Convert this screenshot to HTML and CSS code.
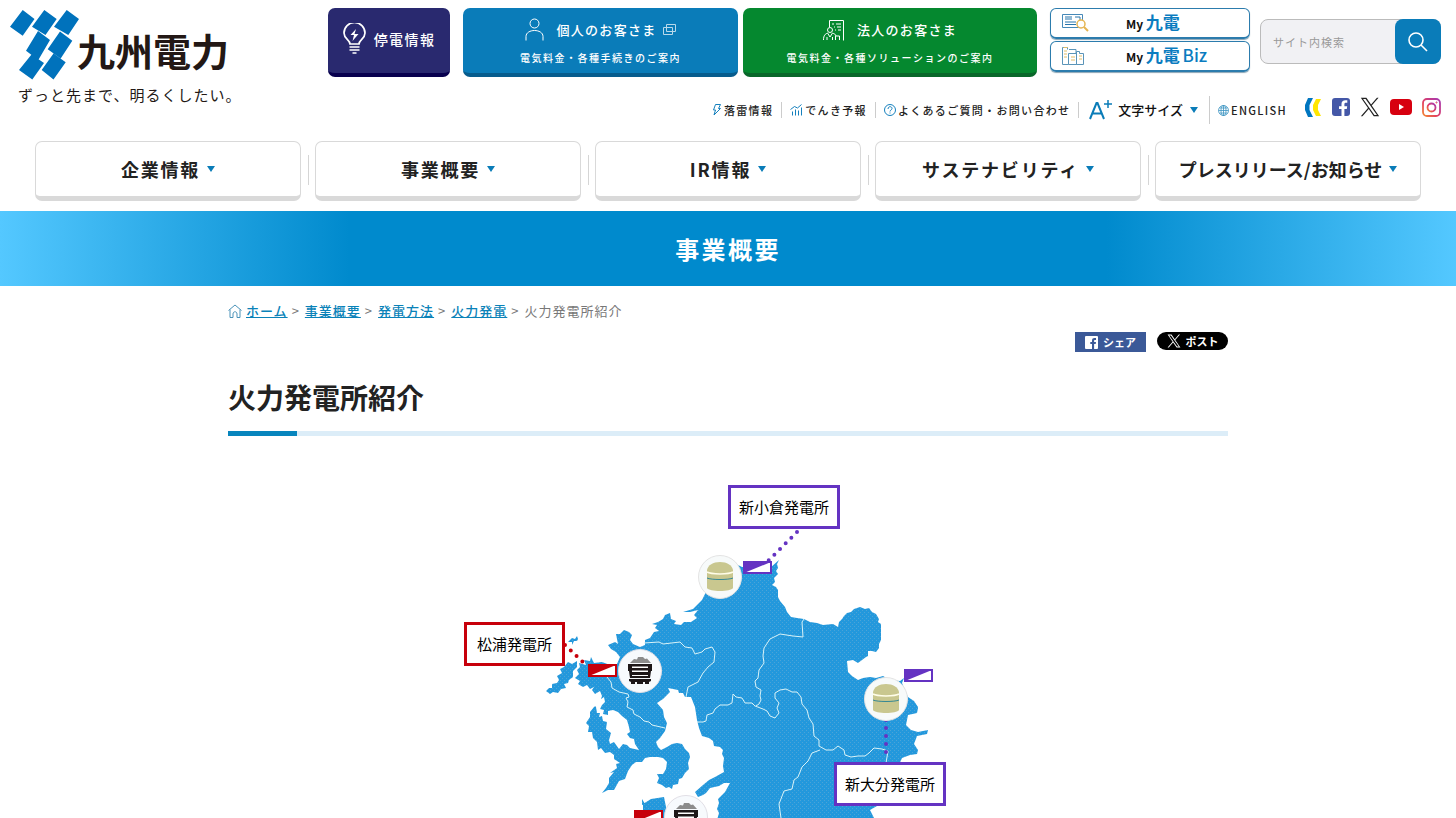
FILE: index.html
```html
<!DOCTYPE html>
<html lang="ja">
<head>
<meta charset="utf-8">
<title>火力発電所紹介</title>
<link rel="stylesheet" href="styles.css">
</head>
<body>
<svg class="defs" aria-hidden="true">
  <symbol id="x-mark" viewBox="0 0 24 24"><path fill="currentColor" d="M14.1 10.3 22.3 1h-2l-7 8.1L7.700 1H1l8.600 12.200L1 23h2l7.500-8.600 6 8.600H23zM3.700 2.400h3L20.300 21.600h-3z"/></symbol>
  <symbol id="tank" viewBox="0 0 44 44">
    <circle cx="22" cy="22" r="21.500" fill="#f7fafa" stroke="#e3e3e3"/>
    <path fill="#c9c78f" d="M9 15c1-5 6-8 13-8s12 3 13 8v18c-2 4-24 4-26 0z"/>
    <path d="M9 17c4 2.500 22 2.500 26 0" fill="none" stroke="#fffde8" stroke-width="1.500"/>
    <path d="M9 23c4 2 22 2 26 0" fill="none" stroke="#368894" stroke-width="1"/>
  </symbol>
  <symbol id="coal" viewBox="0 0 44 44">
    <circle cx="22" cy="22" r="21.500" fill="#f7fafd" stroke="#e1dfe6"/>
    <path fill="#8c8c8c" d="M12 14l4-4 3 .5 1-2.500h5l2 2 2-.5 4 4.500z"/>
    <path fill="#1d1718" d="M10 15h24v7h-1l-1 7H12l-1-7h-1zM11 30h22v2l-2 1v2h-4v-2h-2v2h-6v-2h-2v2h-4v-2l-2-1z"/>
    <path fill="#fff" d="M14 17.500h16v1.500H14zM14 21.500h16v1.500H14zM14 26h16v1H14z"/>
  </symbol>
</svg>
<header class="header">
  <div class="header-top">
    <a class="brand" href="#">
      <span class="brand-row">
        <svg class="brand-mark" viewBox="10 10 70 70" aria-hidden="true"><path fill="#0072bc" d="M22.700 10L34.500 19 22.700 35.700 10 26.700zM44.300 10L56.700 19 45.500 35 32 26.700zM38 31L50 40 38.300 60 26 50.700zM31.500 54.500L44 63 32.300 79.500 19 70zM66.700 10L79 19 68.300 35 54 26.700zM60 31.500L72.300 40.700 60.700 58.500 47.700 49.300zM53.500 53.500L65.700 62.300 53.500 79.500 41.700 70z"/></svg>
        <span class="brand-name">九州電力</span>
      </span>
      <span class="brand-tag">ずっと先まで、明るくしたい。</span>
    </a>
    <div class="tools">
      <div class="quick">
        <a class="tile tile-navy" href="#">
          <svg width="23" height="32" viewBox="0 0 23 32" fill="none" stroke="#fff" stroke-width="1.700" aria-hidden="true"><path d="M7 21c0-4-6-5-6-11a10.300 10.300 0 0 1 21 0c0 6-6 7-6 11zM6.500 24h10M6.500 27h10M9.500 30h4"/><path fill="#fff" stroke="none" d="M13 6l-5.500 6h3.500l-1.500 6 6-7h-4z"/></svg>
          <span>停電情報</span>
        </a>
        <a class="tile tile-blue" href="#">
          <span class="tile-head">
            <svg width="19" height="23" viewBox="0 0 19 23" fill="none" stroke="#fff" aria-hidden="true"><circle cx="9.500" cy="5.500" r="4.500"/><path d="M1 22.500v-4c0-8 17-8 17 0v4"/></svg>
            <span>個人のお客さま</span>
            <svg width="13" height="12" viewBox="0 0 13 12" fill="none" stroke="#b9d9ea" aria-hidden="true"><path d="M3.500.5h9v7h-9zM.5 3.500h9v7h-9z"/></svg>
          </span>
          <span class="tile-sub">電気料金・各種手続きのご案内</span>
        </a>
        <a class="tile tile-green" href="#">
          <span class="tile-head">
            <svg width="22" height="22" viewBox="0 0 22 22" fill="none" stroke="#fff" aria-hidden="true"><path d="M6.500 8V1.500h14v20M9 5h2m2 0h5M11 8h1m2 0h4M12 11h1m2 0h3M.5 21c0-5 2-6 4-7l2.500 4 2.500-4c2 1 3 1 3.500 3M4 21v-3M9.500 21v-3M12.500 21v-4h4v4"/><circle cx="7" cy="11" r="2.500"/></svg>
            <span>法人のお客さま</span>
          </span>
          <span class="tile-sub">電気料金・各種ソリューションのご案内</span>
        </a>
        <div class="my">
          <a class="my-link" href="#">
            <svg width="28" height="20" viewBox="0 0 28 20" fill="none" aria-hidden="true"><path stroke="#4689b8" d="M1.500 1.500h20v13h-20z"/><path stroke="#2875ab" d="M4 4h7M4 6h7M4 9h11M4 11.500h11M14 4h5v4"/><circle cx="20" cy="11" r="4" fill="#fff" stroke="#e5b552" stroke-width="1.500"/><path stroke="#e5b552" stroke-width="2" d="M23 14l4 4"/></svg>
            <span class="my-text">My <b>九電</b></span>
          </a>
          <a class="my-link" href="#">
            <svg width="28" height="20" viewBox="0 0 28 20" fill="none" stroke="#5a94b8" aria-hidden="true"><path d="M6.500 3.500v-2h-5v17h6M15.500 18.500h7v-11h-4v-2h-3zM7.500 7.500h8v11h-8zM8 3.500h7v4"/><path stroke="#e2bd68" d="M2.500 1.500h4M3 5h3M3 8h3M3 11h3M10 11h4M10 14h4M18 10h3M18 13h3"/></svg>
            <span class="my-text">My <b>九電</b> <b class="biz">Biz</b></span>
          </a>
        </div>
        <form class="search">
          <input type="search" placeholder="サイト内検索" aria-label="サイト内検索">
          <button type="button" aria-label="検索"><svg width="20" height="20" viewBox="0 0 20 20" fill="none" stroke="#fff" stroke-width="1.600"><circle cx="8" cy="8" r="7"/><path d="M13 13l6 6"/></svg></button>
        </form>
      </div>
      <div class="utility">
        <a href="#"><svg width="10" height="12" viewBox="0 0 10 12" fill="none" stroke="#1580bd" aria-hidden="true"><path d="M3.500.5h5l-2 4h2L2 11l1.500-5h-2z"/></svg>落雷情報</a>
        <a href="#"><svg width="13" height="12" viewBox="0 0 13 12" fill="none" stroke="#1580bd" aria-hidden="true"><path d="M.5 5.500l4-3 3 1.500 4-3.500M2.500 11.500v-4M5.500 11.500v-6M8.500 11.500v-5M11.500 11.500v-8"/></svg>でんき予報</a>
        <a href="#"><svg width="12" height="12" viewBox="0 0 12 12" fill="none" stroke="#1580bd" aria-hidden="true"><circle cx="6" cy="6" r="5.500"/><path d="M4 5c0-3 4-3 4-.5C8 6 6 6 6 7.500M6 8.500v1"/></svg>よくあるご質問・お問い合わせ</a>
        <button class="size" type="button"><svg width="24" height="22" viewBox="0 0 24 22" fill="none" stroke="#0a7cb8" aria-hidden="true"><path stroke-width="2" d="M1 20L7.500 4h1L15 20M3.500 14.500h9"/><path stroke-width="1.500" d="M19 1v8M15 5h8"/></svg><span>文字サイズ</span><i class="caret"></i></button>
        <a class="english" href="#"><svg width="11" height="11" viewBox="0 0 11 11" fill="none" stroke="#3c94c2" stroke-width=".8" aria-hidden="true"><circle cx="5.500" cy="5.500" r="5"/><ellipse cx="5.500" cy="5.500" rx="2.500" ry="5"/><path d="M5.500 0v11M.5 5.500h10M1.500 3h8M1.500 8h8"/></svg>ENGLISH</a>
        <div class="social">
          <a href="#" aria-label="キレイライフプラス"><svg width="17" height="19" viewBox="0 0 17 19"><path fill="#0076c0" d="M3 0h5L4.500 7v5L8 19H3L0 12V7z"/><path fill="#ffe600" d="M11 1h5l-3 6v5l3 6h-5l-3-6V7z"/></svg></a>
          <a href="#" aria-label="Facebook"><svg width="18" height="18" viewBox="0 0 18 18"><rect width="18" height="18" rx="3" fill="#4457a7"/><path fill="#fff" d="M9.500 18v-7H7V8.200h2.500V6c0-2.600 1.500-3.800 4-3.800h1.800v2.600H14c-1.200 0-1.600.5-1.600 1.500v1.900h2.800l-.4 2.800h-2.400v7z"/></svg></a>
          <a href="#" aria-label="X"><svg width="20" height="20"><use href="#x-mark"/></svg></a>
          <a href="#" aria-label="YouTube"><svg width="22" height="16" viewBox="0 0 22 16"><rect width="22" height="16" rx="4" fill="#d7000f"/><path fill="#fff" d="M9 5v6l5-3z"/></svg></a>
          <a href="#" aria-label="Instagram"><svg width="19" height="19" viewBox="0 0 19 19" fill="none" stroke="url(#insta)" stroke-width="1.800"><defs><linearGradient id="insta" x1="0" y1="1" x2="1" y2="0"><stop stop-color="#f38a32"/><stop offset=".4" stop-color="#e4405f"/><stop offset="1" stop-color="#a438b5"/></linearGradient></defs><rect x="1" y="1" width="17" height="17" rx="4"/><circle cx="9.500" cy="9.500" r="4"/><circle cx="14.500" cy="4.500" r=".6" stroke-width="1"/></svg></a>
        </div>
      </div>
    </div>
  </div>
  <nav class="nav">
    <a href="#">企業情報<i class="caret"></i></a>
    <a href="#">事業概要<i class="caret"></i></a>
    <a href="#">IR情報<i class="caret"></i></a>
    <a href="#">サステナビリティ<i class="caret"></i></a>
    <a class="tight" href="#">プレスリリース/お知らせ<i class="caret"></i></a>
  </nav>
</header>
<p class="banner">事業概要</p>
<main class="main">
  <nav class="crumbs" aria-label="パンくず">
    <svg width="14" height="14" viewBox="0 0 14 14" fill="none" stroke="#4a92b8" aria-hidden="true"><path d="M.5 6.500L7 1l6.500 5.500M2 5.500v8h3V10c0-3 4-3 4 0v3.500h3v-8"/></svg>
    <a href="#">ホーム</a><span class="sep">&gt;</span><a href="#">事業概要</a><span class="sep">&gt;</span><a href="#">発電方法</a><span class="sep">&gt;</span><a href="#">火力発電</a><span class="sep">&gt;</span><span>火力発電所紹介</span>
  </nav>
  <div class="share">
    <a class="share-fb" href="#"><svg width="13" height="13" viewBox="0 0 13 13" aria-hidden="true"><rect width="13" height="13" rx="1" fill="#fff"/><path fill="#3b5998" d="M7 13V8H5.300V6H7V4.500C7 2.800 8 2 9.500 2H11v2h-1c-.7 0-.9.300-.9.900V6H11l-.3 2H9.100v5z"/></svg>シェア</a>
    <a class="share-x" href="#"><svg width="14" height="14" aria-hidden="true"><use href="#x-mark"/></svg>ポスト</a>
  </div>
  <h1 class="title">火力発電所紹介</h1>
  <div class="map">
    <svg class="map-art" viewBox="456 476 544 342" aria-hidden="true">
      <defs><pattern id="dots" width="4" height="4" patternUnits="userSpaceOnUse"><rect width="4" height="4" fill="#2398dc"/><path fill="#4ba4d8" d="M0 0h1v1H0zM2 2h1v1H2z"/></pattern></defs>
      <g fill="url(#dots)">
        <path d="M779 560L777 564 778 568 776 571 778 574 774 578 775 582 772 585 776 587 778 590 778 597 780 601 785 607 787 612 791 617 797 618 804 619 810 622 817 623 823 625 833 624 838 627 839 622 842 619 844 616 847 613 851 612 854 609 860 607 865 609 869 608 872 612 876 614 879 619 878 622 881 624 881 640 879 644 879 648 876 652 872 651 868 651 868 656 866 657 862 660 858 663 853 660 847 661 848 672 852 676 858 680 863 678 870 677 876 678 883 676 890 680 900 681 904 678 902 683 908 697 914 701 918 707 917 712 908 711 918 708 917 713 908 715 906 725 911 730 918 732 928 730 927 734 917 736 914 744 918 750 917 754 910 755 902 758 898 767 885 797 877 806 870 810 875 820 717 820 719 813 717 809 719 803 718 799 725 792 730 783 724 783 719 786 710 788 706 793 703 795 698 797 695 792 703 785 709 780 715 777 724 772 723 766 724 758 722 754 723 750 720 747 714 746 713 741 709 738 702 736 699 728 697 720 695 707 691 697 685 697 683 693 679 693 678 690 673 689 668 688 670 692 668 694 663 699 657 703 663 710 664 717 667 723 665 731 660 738 656 742 658 747 661 750 667 747 672 744 677 743 682 744 685 749 689 753 690 757 688 763 689 769 685 773 682 778 679 779 678 784 673 785 672 789 669 787 666 788 662 785 657 783 659 778 657 774 663 774 666 769 667 762 663 758 658 757 650 757 645 758 642 762 636 762 632 765 628 771 625 779 619 781 614 790 608 790 602 793 606 788 609 783 609 778 614 772 610 773 617 768 616 764 620 763 614 759 614 755 610 752 605 753 601 748 598 750 597 742 593 738 592 732 588 732 589 726 586 723 590 717 590 712 594 707 600 702 602 696 600 691 595 694 592 690 594 687 590 689 587 685 583 687 578 684 580 681 575 678 579 674 577 670 580 667 579 663 586 665 584 660 590 661 591 657 594 663 602 662 610 665 617 664 620 657 616 652 611 649 608 645 615 642 618 644 617 639 616 634 620 634 624 630 629 632 632 635 630 640 633 644 640 647 645 645 645 640 650 638 654 632 659 631 655 628 657 625 652 624 658 622 663 619 665 615 670 613 671 619 676 621 674 624 681 625 684 622 691 622 697 618 694 615 698 610 690 612 683 612 693 609 702 600 710 584 738 565 742 567 770 568z"/>
        <path d="M568 662L572 664 577 661 577 667 573 671 573 677 569 680 568 683 564 684 566 688 561 689 558 693 553 692 550 694 546 691 549 688 552 688 552 684 557 683 559 680 557 676 562 673 560 669 564 667zM568 642l4-4 3 1 2-3 1 3-1 2-3 0-2 4 0-3zM643 804l8-5 13-2 2 10v11h-23zM642 799l3 5-3 1z"/>
      </g>
      <path fill="#fff" d="M592 697L597 698 599 696 601 699 604 697 605 702 602 705 600 709 604 710 603 714 608 715 608 711 613 710 618 712 622 716 627 720 629 727 630 732 627 734 630 738 634 739 635 744 639 750 630 748 627 745 623 744 619 749 614 742 610 744 609 740 611 733 606 729 607 722 603 721 602 716 599 717 600 713 597 713 596 707 592 703z"/>
      <g class="borders">
        <path d="M804 619l-2 3 1 15-10-1-13-2-10 5-6 9-1 8 1 7-5 7-1 8-3 3 1 6 5 3-1 6 1 4-2 4-3 2"/>
        <path d="M697 722h6l3-1 1-6 6-2 2-4 5-4 8 0 4-2 1-9 3 3 6 1 3 5 7 0 3 3 8 3 4 2 3 5 5 2 4-5-2-5 2-5-4-5 0-5 5-3 6-1 6 3 5 0 4 5 1 7 5 6 2 8 4 6 1 12 5 4 0 6 7 4 7 0 5-4 6 4 1 5 6 2 7-1 7 0 4-3 5-5 8 1 6 2-2 12M820 750l-8 3-4 8-6 6-4 10-4 3-2 9-8 2-5 13 2 14"/>
        <path d="M644 643l15-1 4 2 17-2 5 5 7 1 3 6 7-2 3-3 7-2 3 5-1 10-6 5-5 6-5 9-10 5-2 10M607 677l4 5 1 6 7 4 9 2 1 3-3 1 2 4-1 5 6 3 1 4 6 3 4 4 5 1 3 3 13 3"/>
      </g>
      <g class="route">
        <path stroke="#6433c2" d="M797 532l-29 29M886 720v40"/>
        <path stroke="#c7000b" d="M565 645l23 22"/>
      </g>
      <g stroke-width="2">
        <g stroke="#6433c2"><path fill="#fff" d="M744 562h27v11h-27zM905 670h27v11h-27z"/><path fill="#6433c2" stroke="none" d="M744 573v-11h27zM905 681v-11h27z"/></g>
        <g stroke="#c7000b"><path fill="#fff" d="M589 665h27v11h-27zM635 811h27v11h-27z"/><path fill="#c7000b" stroke="none" d="M589 676v-11h27zM635 822v-11h27z"/></g>
      </g>
      <use href="#tank" x="698" y="555" width="44" height="44"/>
      <use href="#tank" x="864" y="677" width="44" height="44"/>
      <use href="#coal" x="618" y="649" width="44" height="44"/>
      <use href="#coal" x="664" y="795" width="44" height="44"/>
    </svg>
    <a class="plant plant-kokura" href="#">新小倉発電所</a>
    <a class="plant plant-matsuura" href="#">松浦発電所</a>
    <a class="plant plant-oita" href="#">新大分発電所</a>
  </div>
</main>
</body>
</html>
```

FILE: styles.css
```css
* { box-sizing: border-box; }
body {
  margin: 0;
  background: #fff;
  color: #222;
  font-family: "Noto Sans CJK JP", sans-serif;
}
a { color: inherit; text-decoration: none; }
button { font: inherit; color: inherit; border: 0; padding: 0; background: none; }
svg { display: block; flex: none; }
.defs { position: absolute; width: 0; height: 0; }
.caret {
  flex: none;
  border: 4px solid transparent;
  border-top: 6px solid #0a7cb8;
  border-bottom: 0;
}

.header-top {
  display: flex;
  justify-content: space-between;
  padding: 8px 15px 0 10px;
}
.brand { display: flex; flex-direction: column; color: #231815; white-space: nowrap; }
.brand-row { display: flex; }
.brand-mark { width: 70px; height: 70px; margin-top: 2px; }
.brand-name { margin: 12px 0 0 -3px; font-size: 38px; font-weight: 700; line-height: 60px; }
.brand-tag { padding-left: 8px; font-size: 15px; line-height: 22px; letter-spacing: 1px; margin-top: 4px; }
.tools { display: flex; flex-direction: column; flex: 0 1 1113px; }
.quick { display: flex; height: 69px; white-space: nowrap; }
.tile {
  display: flex;
  align-items: center;
  justify-content: center;
  border-radius: 7px;
  color: #fff;
  font-weight: 500;
  letter-spacing: .1em;
}
.tile-navy { flex: 0 1 122px; gap: 8px; padding-bottom: 4px; font-size: 14px; background: #29296f; border-bottom: 4px solid #08004e; }
.tile-blue, .tile-green { flex-direction: column; gap: 8px; padding-top: 2px; font-size: 13px; }
.tile-blue { flex: 0 1 275px; margin: 0 5px 0 13px; background: #0a7cb9; border-bottom: 4px solid #075c8d; }
.tile-green { flex: 0 1 294px; background: #05882f; border-bottom: 4px solid #09672a; }
.tile-head { display: flex; align-items: center; gap: 12px; line-height: 24px; }
.tile-blue .tile-head { gap: 6px; }
.tile-blue .tile-head span { padding-left: 6px; }
.tile-sub { font-size: 10px; line-height: 16px; letter-spacing: .15em; }
.my { display: flex; flex-direction: column; gap: 2px; flex: 0 1 200px; margin: 0 10px 0 13px; }
.my-link {
  display: flex;
  align-items: center;
  height: 31px;
  padding-left: 10px;
  border: 1px solid #2c7cad;
  border-bottom: 2px solid #2c7cad;
  border-radius: 6px;
  box-shadow: 0 1px 1px #8aa5b5;
  color: #111;
}
.my-text { padding-left: 37px; font-size: 12px; font-weight: 700; line-height: 26px; }
.my-text b { font-size: 17px; font-weight: 700; color: #0a7cc0; }
.my-text .biz { font-weight: 500; }
.search {
  display: flex;
  flex: 0 1 181px;
  min-width: 0;
  height: 45px;
  margin-top: 11px;
  border: 1px solid #bbb;
  border-radius: 8px;
  background: #f1f1f4;
}
.search input {
  flex: 1;
  min-width: 0;
  padding: 0 12px;
  border: 0;
  background: none;
  font: 11px "Noto Sans CJK JP", sans-serif;
  letter-spacing: 1px;
}
.search input::placeholder { color: #999; }
.search button {
  display: grid;
  flex: none;
  place-items: center;
  width: 46px;
  margin: -1px;
  border-radius: 8px;
  background: #0a7cb9;
}
.utility {
  display: flex;
  align-items: center;
  justify-content: flex-end;
  height: 28px;
  margin-top: 19px;
  font-size: 11px;
  font-weight: 500;
  line-height: 16px;
  letter-spacing: .12em;
  white-space: nowrap;
}
.utility > a { display: flex; align-items: center; gap: 2px; padding: 0 8px; border-right: 1px solid #ccc; }
.size { display: flex; align-items: center; gap: 5px; height: 28px; padding: 0 11px 0 10px; border-right: 1px solid #ccc; font-size: 13px; color: #111; }
.size .caret { margin-left: 2px; }
.utility > .english { border: 0; padding-right: 18px; }
.social { display: flex; align-items: center; gap: 10px; padding-bottom: 6px; }

.nav { display: grid; grid-template-columns: repeat(5, 1fr); gap: 14px; padding: 9px 35px 10px; margin-top: 8px; }
.nav a {
  position: relative;
  display: flex;
  align-items: center;
  justify-content: center;
  gap: 7px;
  height: 60px;
  border: 1px solid #d9d9d9;
  border-bottom: 5px solid #d9d9d9;
  border-radius: 7px;
  font-size: 18px;
  font-weight: 700;
  letter-spacing: .1em;
  white-space: nowrap;
}
.nav .tight { letter-spacing: 0; }
.nav a + a::before { content: ""; position: absolute; left: -8px; top: 13px; height: 30px; border-left: 1px solid #d5d5d5; }

.banner {
  margin: 0;
  background: linear-gradient(90deg, #54c8ff 0, #008acd 24%, #008acd 76%, #54c8ff 100%);
  color: #fff;
  font-size: 24px;
  font-weight: 700;
  line-height: 75px;
  letter-spacing: .1em;
  text-align: center;
}
.main { max-width: 1000px; margin: 0 auto; }
.crumbs { display: flex; align-items: center; padding-top: 15px; color: #777; font-size: 13px; line-height: 20px; letter-spacing: 1px; }
.crumbs svg { margin-right: 4px; }
.crumbs a { color: #0a82b8; text-decoration: underline; font-weight: 500; }
.sep { padding: 0 5px 0 4px; }
.share { display: flex; justify-content: flex-end; gap: 11px; padding-top: 11px; color: #fff; font-size: 11px; font-weight: 700; }
.share a { display: flex; align-items: center; justify-content: center; gap: 5px; width: 71px; }
.share-fb { height: 20px; background: #3b5998; }
.share-x { height: 18px; border-radius: 9px; background: #000; }
.title {
  margin: 20px 0 0;
  padding-bottom: 9px;
  border-bottom: 5px solid;
  border-image: linear-gradient(90deg, #0785bd 70px, #dcedf8 70px) 1;
  font-size: 28px;
  font-weight: 700;
  line-height: 50px;
}
.map { position: relative; width: 544px; margin: 40px auto 0; }
.map-art { width: 100%; }
.borders { fill: none; stroke: #d9f3f8; stroke-width: 1; }
.route { fill: none; stroke-width: 4; stroke-linecap: round; stroke-dasharray: 0 8; }
.plant { position: absolute; padding: 0 8px; border: 3px solid #6433c2; background: #fff; color: #000; font-size: 15px; line-height: 38px; white-space: nowrap; }
.plant-kokura { left: 272px; top: 9px; }
.plant-matsuura { left: 8px; top: 146px; padding: 0 10px; border-color: #c7000b; }
.plant-oita { left: 378px; top: 286px; }
```
